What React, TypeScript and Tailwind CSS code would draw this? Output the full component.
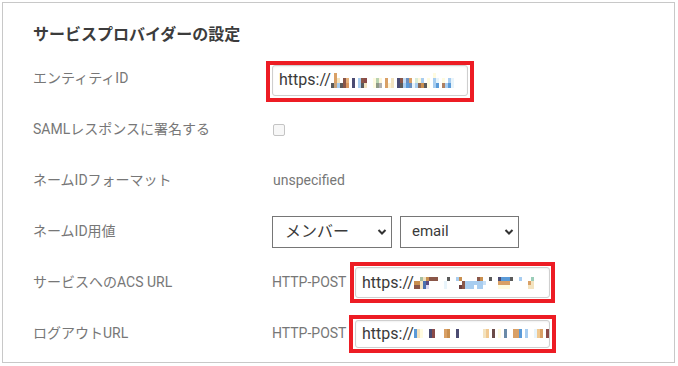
const font = "font-['Roboto','Noto_Sans_CJK_JP',sans-serif]";

// ぼかし部分（モザイク）
const Mosaic = ({ rows, cell }: { rows: string[][]; cell: number }) => {
	return (
		<span className="inline-flex flex-col align-middle">
			{rows.map((row, r) => (
				<span key={r} className="flex">
					{row.map((c, i) => (
						<span
							key={i}
							className="block w-[3px]"
							style={{ height: cell, background: c || "transparent" }}
						/>
					))}
				</span>
			))}
		</span>
	);
};

const _ = "";
const DK = "#5a5a5a";
const OR = "#d9a066";
const CR = "#f3e3c0";
const BR = "#8a5648";
const NV = "#4b4b72";
const LB = "#a8cdf0";
const PL = "#e8f4fb";
const BL = "#5a9ad8";
const TN = "#c98f4f";
const LY = "#fffbe0";
const RD = "#8a4a48";

const entityMosaic = [
	[_, OR, _, _, _, _, _, _, _, _, _, _, _, _, _, _, _, _, _, _, _, _, _, _, _, _, _, _, _, _, _, _, _, _, LY, _, _, _, _, _, _, _],
	[_, OR, CR, _, BR, "#e6b07a", _, NV, _, LB, BR, RD, _, _, LY, "#b9d3b0", "#fff6d8", _, OR, _, CR, _, NV, BR, "#c8dff5", "#6a8fbf", OR, _, "#d8ecd8", "#fff6d8", LB, _, LY, _, LB, PL, _, LY, _, LB, PL, _],
	[DK, "#c8a27a", LB, DK, BR, "#d9965e", _, NV, _, LB, DK, CR, _, _, LY, "#8f9a86", "#b0b0b0", _, OR, "#fff3d6", CR, _, NV, DK, LB, BL, "#6a8fbf", PL, LB, "#8a6a58", TN, DK, LY, _, LB, BL, _, "#b08060", LB, BL, PL, _],
];

const acsMosaic = [
	[_, _, "#a8bfa0", CR, TN, BR, BR, BR, _, _, _, DK, _, _, LB, TN, _, _, _, _, _, BR, TN, _, _, DK, _, _, NV, BL, BL, BL, DK, _, _, LB, _, _, _, "#9acdb8", _],
	[TN, TN, CR, "#4a70b0", "#5a4a80", _, _, _, _, _, PL, _, _, _, _, _, BR, LB, LB, LB, LB, LB, LB, "#c8dff5", _, _, _, _, OR, OR, OR, OR, _, _, _, _, _, _, OR, CR, _],
	[BR, BR, CR, "#4a70b0", "#dcd8f0", _, _, _, _, _, PL, _, _, _, _, "#6a4040", BR, LB, LB, LB, _, LB, LB, _, _, _, _, _, LY, LY, LY, LY, _, _, _, _, _, _, CR, CR, _],
];

const logoutMosaic = [
	[BL, CR, LY, _, _, NV, RD, _, _, _, OR, TN, _, _, NV, _, _, _, _, _, _, _, _, CR, "#f0c890", _, "#6a4a48", _, LY, _, "#6a8aa8", _, _, OR, OR, BL, _, LB, _, _, PL, "#f0c890", OR, _, RD],
];

const UrlInput = ({
	mosaic,
	cell,
	h,
}: {
	mosaic: string[][];
	cell: number;
	h: string;
}) => {
	return (
		<div
			className={`flex w-[195px] items-center overflow-hidden rounded-[3px] border border-[#cfcfcf] bg-white pl-[6px] shadow-[inset_0_1px_2px_rgba(0,0,0,0.06)] ${h}`}
		>
			<span className="text-[16px] text-[#3a3a3a]">https://</span>
			<Mosaic rows={mosaic} cell={cell} />
		</div>
	);
};

const Chevron = () => (
	<svg
		className="pointer-events-none absolute right-[5px] top-1/2 -translate-y-1/2"
		width="10"
		height="7"
		viewBox="0 0 10 7"
	>
		<path d="M1.5 1.5 L5 5 L8.5 1.5" fill="none" stroke="#333" strokeWidth="2" />
	</svg>
);

const Row = ({ label, children }: { label: string; children: React.ReactNode }) => (
	<div className="flex h-[51px] items-center">
		<div className="w-[239px] text-[14px] text-[#777]">{label}</div>
		<div className="flex items-center">{children}</div>
	</div>
);

export default function App() {
	return (
		<div className={`h-[366px] w-[678px] bg-white ${font}`}>
			<div className="ml-[2px] mt-[2px] h-[361px] w-[673px] border border-[#c8c8c8] pl-[30px] pt-[22px]">
				{/* 見出し */}
				<h2 className="h-[20px] text-[16px] font-bold leading-[20px] text-[#3c3c3c]">
					サービスプロバイダーの設定
				</h2>

				<div className="mt-[8px]">
					<Row label="エンティティID">
						<div className="-ml-[6px] mt-[5px] border-4 border-[#ed1c24] px-[2px] pb-[2px]">
							<div className="flex h-[31px] w-[196px] items-center overflow-hidden rounded-[3px] border border-[#cfcfcf] bg-white pl-[6px] shadow-[inset_0_1px_2px_rgba(0,0,0,0.06)]">
								<span className="text-[16px] text-[#3a3a3a]">https://</span>
								<Mosaic rows={entityMosaic} cell={5} />
							</div>
						</div>
					</Row>

					<Row label="SAMLレスポンスに署名する">
						<div className="ml-[1px] h-[12px] w-[12px] rounded-[2px] border border-[#c4c4c4] bg-[#f7f7f7]" />
					</Row>

					<Row label="ネームIDフォーマット">
						<span className="ml-[1px] text-[14px] text-[#777]">unspecified</span>
					</Row>

					<Row label="ネームID用値">
						<div className="relative">
							<select className="h-[32px] w-[120px] appearance-none border border-[#767676] bg-white pl-[12px] text-[16px] text-[#3a3a3a] outline-none">
								<option>メンバー</option>
							</select>
							<Chevron />
						</div>
						<div className="relative ml-[8px]">
							<select className="h-[32px] w-[119px] appearance-none border border-[#767676] bg-white pl-[11px] text-[15px] text-[#3a3a3a] outline-none">
								<option>email</option>
							</select>
							<Chevron />
						</div>
					</Row>

					<Row label="サービスへのACS URL">
						<span className="w-[78px] text-[14px] text-[#777]">HTTP-POST</span>
						<div className="border-4 border-[#ed1c24] p-[1px]">
							<UrlInput mosaic={acsMosaic} cell={4} h="h-[31px]" />
						</div>
					</Row>

					<Row label="ログアウトURL">
						<span className="w-[77px] text-[14px] text-[#777]">HTTP-POST</span>
						<div className="border-4 border-[#ed1c24] px-[2px] py-[1px]">
							<UrlInput mosaic={logoutMosaic} cell={9} h="h-[28px]" />
						</div>
					</Row>
				</div>
			</div>
		</div>
	);
}
